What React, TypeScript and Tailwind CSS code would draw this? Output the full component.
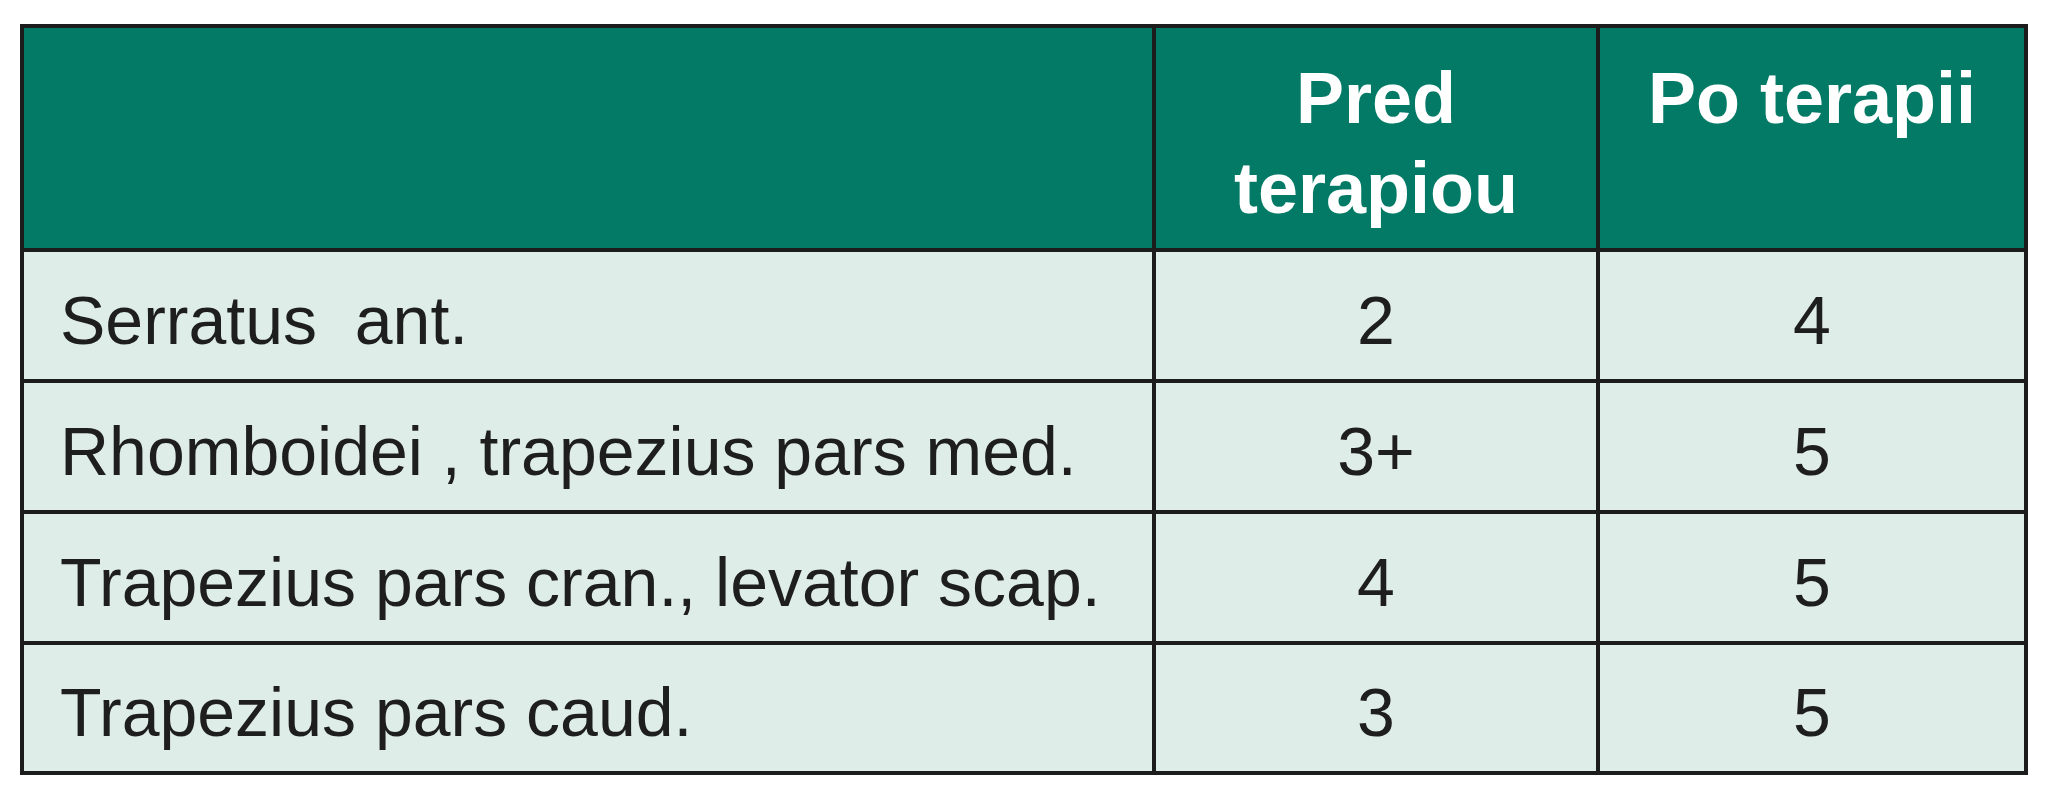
import React from 'react';

type Row = {
    muscle: string;
    before: string;
    after: string;
    h: string;
};

const rows: Row[] = [
    { muscle: 'Serratus  ant.', before: '2', after: '4', h: 'h-[127px]' },
    { muscle: 'Rhomboidei , trapezius pars med.', before: '3+', after: '5', h: 'h-[127px]' },
    { muscle: 'Trapezius pars cran., levator scap.', before: '4', after: '5', h: 'h-[127px]' },
    { muscle: 'Trapezius pars caud.', before: '3', after: '5', h: 'h-[126px]' },
];

const font = "font-['Liberation_Sans',Arial,sans-serif]";

export default function App() {
    return (
        <div className={`min-h-[800px] w-[2048px] bg-white pt-[24px] pl-[20px] ${font}`}>
            {/* dark background shows through the gaps as the grid lines */}
            <div className="grid w-[2008px] grid-cols-[1128px_440px_424px] gap-[4px] bg-[#1c1c1c] p-[4px]">
                {/* Header */}
                <div className="h-[220px] bg-[#037a66]" />
                <div className="h-[220px] bg-[#037a66] pt-[25px] text-center text-[72px] leading-[90px] font-bold text-white">
                    Pred
                    <br />
                    terapiou
                </div>
                <div className="h-[220px] bg-[#037a66] pt-[25px] text-center text-[72px] leading-[90px] font-bold text-white">
                    Po terapii
                </div>

                {/* Body rows */}
                {rows.map((r) => (
                    <React.Fragment key={r.muscle}>
                        <div className={`flex items-center bg-[#deede8] pl-[36px] pt-[8px] text-[68px] leading-none whitespace-pre text-[#1e1e1e] ${r.h}`}>
                            {r.muscle}
                        </div>
                        <div className={`flex items-center justify-center bg-[#deede8] pt-[8px] text-[68px] leading-none text-[#1e1e1e] ${r.h}`}>
                            {r.before}
                        </div>
                        <div className={`flex items-center justify-center bg-[#deede8] pt-[8px] text-[68px] leading-none text-[#1e1e1e] ${r.h}`}>
                            {r.after}
                        </div>
                    </React.Fragment>
                ))}
            </div>
        </div>
    );
}
